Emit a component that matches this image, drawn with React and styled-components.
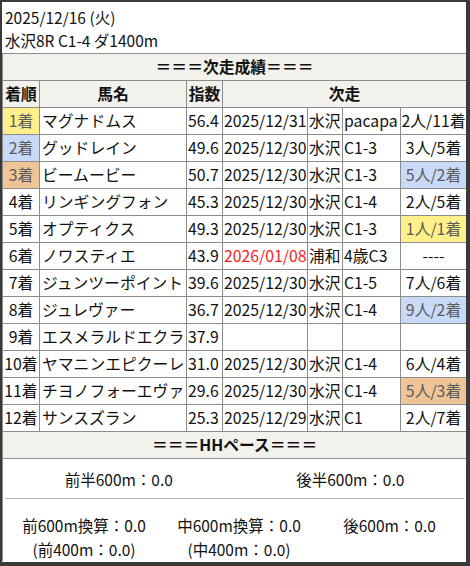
import React from "react";
import styled, { createGlobalStyle } from "styled-components";

const Global = createGlobalStyle`
    body {
        margin: 0;
        background: #3a3a3a;
        font-family: "Noto Sans CJK JP", "Noto Sans", sans-serif;
        color: #111;
    }
`;

const Frame = styled.div`
    margin: 2px 0 0 2px;
    width: 464px;
    height: 560px;
    background: #fff;
    overflow: hidden;
`;

const Heading = styled.div`
    padding: 4px 4px 0 3px;
    height: 47px;
    font-size: 15.5px;
    line-height: 23px;
`;

const Table = styled.table`
    width: 464px;
    border-collapse: collapse;
    table-layout: fixed;
    font-size: 15.8px;
`;

const Col = styled.col`
    width: ${p => p.$w}px;
`;

const Cell = styled.td`
    border: 1px solid #8c8c8c;
    height: 26px;
    padding: 0 ${p => (p.$tight ? 0 : p.$pad || 1)}px;
    line-height: 26px;
    white-space: nowrap;
    overflow: hidden;
    text-align: ${p => (p.$tight ? "center" : "left")};
    background: ${p => p.$bg || "transparent"};
    color: ${p => (p.$red ? "#ff1a1a" : p.$bg ? "#5a5a5a" : "#111")};
`;

const HeadCell = styled.th`
    border: 1px solid #8c8c8c;
    height: 26px;
    padding: 0;
    line-height: 26px;
    font-weight: bold;
    text-align: center;
    background: #f2f1ec;
`;

const PaceCell = styled.td`
    border: 1px solid #8c8c8c;
    border-bottom: none;
    padding: 0;
    font-size: 15.5px;
`;

const HalfRow = styled.div`
    display: grid;
    grid-template-columns: 1fr 1fr;
    height: 39px;
    align-items: center;
    text-align: center;
`;

const Divider = styled.div`
    height: 1px;
    margin: 0 2px;
    background: #b4b4b4;
`;

const SplitGrid = styled.div`
    display: grid;
    grid-template-columns: 162px 148px 1fr;
    padding-top: 14px;
    line-height: 24px;
    text-align: center;
`;

const colors = {
    1: "#fff08c",
    2: "#c9daf8",
    3: "#efc598",
};

const widths = [37, 147, 36, 85, 35, 58, 66];

const rows = [
    [1, "マグナドムス", "56.4", "2025/12/31", "水沢", "pacapa", "2人/11着", 0],
    [2, "グッドレイン", "49.6", "2025/12/30", "水沢", "C1-3", "3人/5着", 0],
    [3, "ビームービー", "50.7", "2025/12/30", "水沢", "C1-3", "5人/2着", 2],
    [4, "リンギングフォン", "45.3", "2025/12/30", "水沢", "C1-4", "2人/5着", 0],
    [5, "オプティクス", "49.3", "2025/12/30", "水沢", "C1-3", "1人/1着", 1],
    [6, "ノワスティエ", "43.9", "2026/01/08", "浦和", "4歳C3", "----", 0, true],
    [7, "ジュンツーポイント", "39.6", "2025/12/30", "水沢", "C1-5", "7人/6着", 0],
    [8, "ジュレヴァー", "36.7", "2025/12/30", "水沢", "C1-4", "9人/2着", 2],
    [9, "エスメラルドエクラ", "37.9", "", "", "", "", 0],
    [10, "ヤマニンエピクーレ", "31.0", "2025/12/30", "水沢", "C1-4", "6人/4着", 0],
    [11, "チヨノフォーエヴァ", "29.6", "2025/12/30", "水沢", "C1-4", "5人/3着", 3],
    [12, "サンスズラン", "25.3", "2025/12/29", "水沢", "C1", "2人/7着", 0],
];

const App = () => {
    return (
        <Frame>
            <Global />
            <Heading>
                <div>2025/12/16 (火)</div>
                <div>水沢8R C1-4 ダ1400m</div>
            </Heading>
            <Table>
                <colgroup>
                    {widths.map((w, i) => (
                        <Col key={i} $w={w} />
                    ))}
                </colgroup>
                <tbody>
                    <tr>
                        <HeadCell colSpan={7}>＝＝＝次走成績＝＝＝</HeadCell>
                    </tr>
                    <tr>
                        <HeadCell>着順</HeadCell>
                        <HeadCell>馬名</HeadCell>
                        <HeadCell>指数</HeadCell>
                        <HeadCell colSpan={4}>次走</HeadCell>
                    </tr>
                    {rows.map(([rank, name, score, date, place, cls, result, res, red]) => (
                        <tr key={rank}>
                            <Cell $tight $bg={colors[rank]}>{rank}着</Cell>
                            <Cell $pad={2}>{name}</Cell>
                            <Cell>{score}</Cell>
                            <Cell $red={red}>{date}</Cell>
                            <Cell>{place}</Cell>
                            <Cell>{cls}</Cell>
                            <Cell $tight $bg={colors[res]}>{result}</Cell>
                        </tr>
                    ))}
                    <tr>
                        <HeadCell colSpan={7}>＝＝＝HHペース＝＝＝</HeadCell>
                    </tr>
                    <tr>
                        <PaceCell colSpan={7}>
                            <HalfRow>
                                <div>前半600m：0.0</div>
                                <div>後半600m：0.0</div>
                            </HalfRow>
                            <Divider />
                            <SplitGrid>
                                <div>前600m換算：0.0</div>
                                <div>中600m換算：0.0</div>
                                <div>後600m：0.0</div>
                                <div>(前400m：0.0)</div>
                                <div>(中400m：0.0)</div>
                                <div />
                            </SplitGrid>
                        </PaceCell>
                    </tr>
                </tbody>
            </Table>
        </Frame>
    );
};

export default App;
